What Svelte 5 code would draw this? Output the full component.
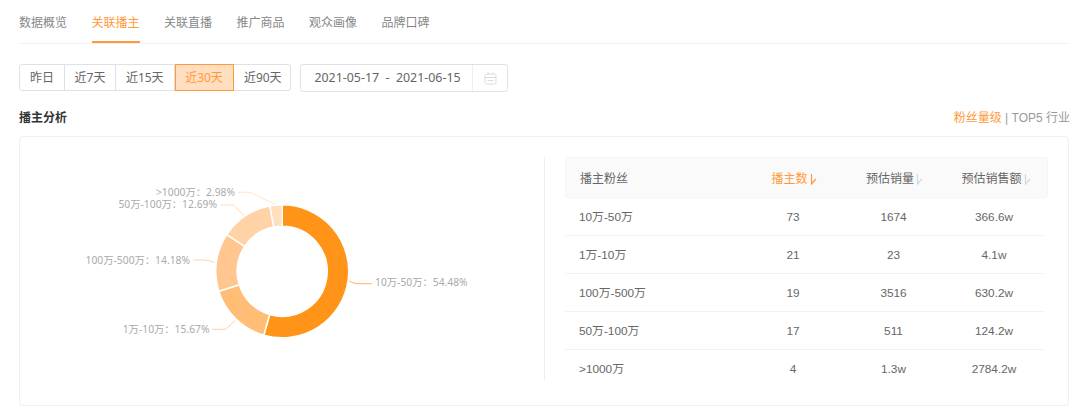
<script>
  const tabs = ['数据概览', '关联播主', '关联直播', '推广商品', '观众画像', '品牌口碑'];
  const ranges = [['昨日', 45], ['近7天', 51], ['近15天', 58.5], ['近30天', 59], ['近90天', 58.5]];
  const cx = 282.2, cy = 271.3, R = 66.5, r = 45;
  const slices = [
    { v: 54.48, c: '#ff9419', label: '10万-50万：54.48%', x: 375, y: 282, a: 'start', line: 'M349.3 281 Q353 283.7 358.3 283.7 L371.7 283.7', lc: '#ffb266' },
    { v: 15.67, c: '#ffbd76', label: '1万-10万：15.67%', x: 209.5, y: 328.5, a: 'end', line: 'M235 320.7 L225.7 329.3 L212 329.3', lc: '#ffd0a0' },
    { v: 14.18, c: '#ffc78f', label: '100万-500万：14.18%', x: 190, y: 260, a: 'end', line: 'M215 262.3 Q208 260 203.3 260 L193.3 260', lc: '#ffd5ac' },
    { v: 12.69, c: '#ffd3a5', label: '50万-100万：12.69%', x: 217, y: 204, a: 'end', line: 'M244.3 215.7 L233.3 205 L220.7 205', lc: '#ffdcbb' },
    { v: 2.98, c: '#ffdfbd', label: '>1000万：2.98%', x: 235, y: 192, a: 'end', line: 'M275 204.3 L250 192.3 L237.7 192.3', lc: '#ffe5cc' }
  ];
  function pt(rad, deg) {
    const t = (deg - 90) * Math.PI / 180;
    return `${(cx + rad * Math.cos(t)).toFixed(2)} ${(cy + rad * Math.sin(t)).toFixed(2)}`;
  }
  let acc = 0;
  const arcs = slices.map((s) => {
    const a0 = acc * 3.6, a1 = (acc + s.v) * 3.6;
    acc += s.v;
    const large = a1 - a0 > 180 ? 1 : 0;
    return { ...s, d: `M${pt(R, a0)} A${R} ${R} 0 ${large} 1 ${pt(R, a1)} L${pt(r, a1)} A${r} ${r} 0 ${large} 0 ${pt(r, a0)} Z` };
  });
  const rows = [
    ['10万-50万', '73', '1674', '366.6w'],
    ['1万-10万', '21', '23', '4.1w'],
    ['100万-500万', '19', '3516', '630.2w'],
    ['50万-100万', '17', '511', '124.2w'],
    ['>1000万', '4', '1.3w', '2784.2w']
  ];
</script>

<div class="page">
  <nav class="tabs">
    {#each tabs as t, i}
      <span class="tab" class:on={i === 1}>{t}</span>
    {/each}
  </nav>

  <div class="filters">
    <div class="seg">
      {#each ranges as [t, w], i}
        <span class="seg-item" class:on={i === 3} style="width:{w}px">{t}</span>
      {/each}
    </div>
    <div class="date">
      <span class="date-text">2021-05-17&nbsp; -&nbsp; 2021-06-15</span>
      <span class="date-icon">
        <svg width="13" height="13" viewBox="0 0 13 13" fill="none" stroke="#d8dbe0" stroke-width="1">
          <rect x="1" y="2" width="11" height="10" rx="1.5" />
          <path d="M1 5.5H12M4 0.5V3M9 0.5V3M3.5 8.5H9.5" />
        </svg>
      </span>
    </div>
  </div>

  <div class="head">
    <h2>播主分析</h2>
    <div class="switch"><span class="hl">粉丝量级</span> | TOP5 行业</div>
  </div>

  <section class="card">
    <div class="chart">
      <svg class="donut" width="1080" height="415" viewBox="0 0 1080 415">
        {#each arcs as s}
          <path d={s.d} fill={s.c} stroke="#fff" stroke-width="1.5" />
          <path d={s.line} fill="none" stroke={s.lc} stroke-width="1" />
          <text x={s.x} y={s.y} text-anchor={s.a} dominant-baseline="central">{s.label}</text>
        {/each}
      </svg>
    </div>
    <div class="table">
      <div class="thead">
        <span class="c0">播主粉丝</span>
        <span class="c1 hl">播主数<svg class="sort" width="7" height="11" viewBox="0 0 7 11"><path d="M1.5 0V10L6 5" fill="none" stroke="#ff9a3c" stroke-width="1.2" /></svg></span>
        <span class="c2">预估销量<svg class="sort" width="7" height="11" viewBox="0 0 7 11"><path d="M1.5 0V10L6 5" fill="none" stroke="#d5d8dd" stroke-width="1.2" /></svg></span>
        <span class="c3">预估销售额<svg class="sort" width="7" height="11" viewBox="0 0 7 11"><path d="M1.5 0V10L6 5" fill="none" stroke="#d5d8dd" stroke-width="1.2" /></svg></span>
      </div>
      {#each rows as row}
        <div class="row">
          <span class="c0">{row[0]}</span>
          <span class="c1">{row[1]}</span>
          <span class="c2">{row[2]}</span>
          <span class="c3">{row[3]}</span>
        </div>
      {/each}
    </div>
  </section>
</div>

<style>
  :global(body) { margin: 0; background: #fff; }
  .page {
    width: 1080px; height: 415px; box-sizing: border-box; padding: 0 11px 0 19px; overflow: hidden;
    font-family: "Noto Sans CJK SC", "Noto Sans", sans-serif; color: #666; font-size: 12px;
    position: relative;
  }
  .tabs { display: flex; gap: 24.5px; height: 43px; border-bottom: 1px solid #eeeff1; }
  .tab { height: 43px; line-height: 44px; box-sizing: border-box; color: #888; white-space: nowrap; }
  .tab.on { color: #ff9a3c; border-bottom: 2px solid #ff9a3c; }
  .filters { display: flex; gap: 9px; margin-top: 20px; align-items: flex-start; }
  .seg { display: flex; height: 27px; border: 1px solid #dfe1e6; border-radius: 3px; box-sizing: border-box; width: 272px; }
  .seg-item { box-sizing: border-box; text-align: center; line-height: 25px; color: #666; border-right: 1px solid #dfe1e6; flex: none; font-family: "Noto Sans", "Noto Sans CJK SC", sans-serif; }
  .seg-item:last-child { border-right: 0; }
  .seg-item.on { background: #ffdfbf; color: #ff9a3c; border: 1px solid #ff9a3c; margin: -1px 0; height: 27px; }
  .date { display: flex; width: 208px; height: 28px; box-sizing: border-box; border: 1px solid #dfe1e6; border-radius: 3px; }
  .date-text { flex: 1; text-align: center; line-height: 26px; font-size: 12.4px; padding-left: 2px; font-family: "Noto Sans", sans-serif; color: #666; white-space: nowrap; }
  .date-icon { width: 34px; border-left: 1px solid #eceef1; display: flex; align-items: center; justify-content: center; }
  .head { display: flex; justify-content: space-between; align-items: center; margin-top: 15px; height: 19px; }
  h2 { margin: 0; font-size: 12px; font-weight: 700; color: #333; }
  .switch { color: #999; font-family: "Liberation Sans", "Noto Sans CJK SC", sans-serif; white-space: nowrap; margin-right: -1px; }
  .hl { color: #ff9a3c; }
  .card {
    margin-top: 10px; height: 270px; box-sizing: border-box; border: 1px solid #eff0f2; border-radius: 4px;
    display: flex; padding: 20px 20px 0 0;
  }
  .chart { width: 524px; height: 223px; flex: none; border-right: 1px solid #eceef1; }
  .donut { position: absolute; left: 0; top: 0; pointer-events: none; }
  .donut text { font-size: 10.3px; fill: #aaa; font-family: "Noto Sans", "Noto Sans CJK SC", sans-serif; }
  .table { margin-left: 20px; width: 484px; font-family: "Liberation Sans", "Noto Sans CJK SC", sans-serif; }
  .thead, .row { display: grid; grid-template-columns: 178px 100px 101px 1fr; align-items: center; text-align: center; }
  .thead { height: 41px; background: #fafafa; border: 1px solid #f3f4f5; border-radius: 3px; box-sizing: border-box; font-family: "Noto Sans CJK SC", sans-serif; }
  .row { height: 38px; line-height: 14px; box-sizing: border-box; border-bottom: 1px solid #f2f3f4; margin-right: 4px; color: #666; font-size: 11.8px; }
  .row:last-child { border-bottom: 0; }
  .c0 { text-align: left; padding-left: 14px; }
  .sort { vertical-align: -2px; margin-left: 2px; }
</style>
